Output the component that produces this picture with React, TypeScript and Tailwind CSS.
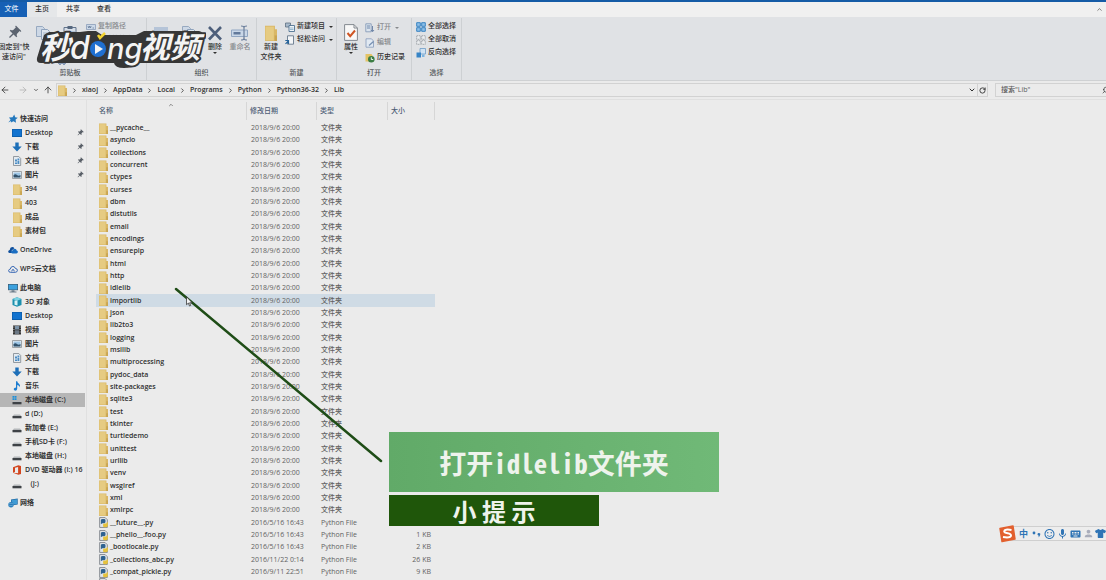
import { Fragment, type ReactNode } from "react"
import { ArrowLeft, ArrowRight, ArrowUp, ChevronDown, ChevronRight, ChevronUp, RotateCw, Search } from "lucide-react"
import { MdKeyboard, MdMic, MdOutlineSentimentSatisfied, MdPerson, MdPushPin } from "react-icons/md"
import { FaTshirt } from "react-icons/fa"

interface IconProps {
    className?: string
}

function FolderIcon({ className = "h-[11px] w-[9px]" }: IconProps) {
    return (
        <svg viewBox="0 0 8 10" preserveAspectRatio="none" className={`shrink-0 ${className}`}>
            <path d="M0 .5h6.6v2.2H8V10H0z" fill="#d9b765" />
            <path d="M.3 1h5.6v8.6H.3z" fill="#e6cb82" />
            <path d="M6.4 6.5H8V10H6.4z" fill="#c9a552" />
        </svg>
    )
}

function PythonFileIcon() {
    return (
        <svg viewBox="0 0 8 10" className="h-[11px] w-[9px] shrink-0">
            <path d="M.5.5h5L7.5 2.5v7h-7z" fill="#e3e6e9" stroke="#7d838a" strokeWidth=".8" />
            <path d="M1.600 6.400V3q0-1.200 1.600-1.200h1.400q1.200 0 1.200 1.200v1.600q0 1-1.200 1H3q-.8 0-.8.800z" fill="#2f6290" />
            <path d="M8 4.800v3q0 1.600-1.600 1.600H5q-1.400 0-1.400-1.200V7q0-1 1.200-1h1.400q.9 0 .9-1.200z" fill="#e5c23d" />
        </svg>
    )
}

function DesktopIcon() {
    return (
        <svg viewBox="0 0 10 10" className="size-[10px]">
            <path d="M0 1h10v8H0z" fill="#0c5ca8" />
            <path d="M.7 1.7h8.6v6.4H.7z" fill="#1273cf" />
        </svg>
    )
}

function DownloadIcon() {
    return (
        <svg viewBox="0 0 10 10" className="size-[10px]">
            <path d="M3.3.5h3.4v4H9.7L5 9.6.3 4.5h3z" fill="#1d6fb8" />
        </svg>
    )
}

function DocumentIcon() {
    return (
        <svg viewBox="0 0 10 10" className="size-[10px]">
            <path d="M1.5.5h5.3l1.9 2v7H1.5z" fill="#e3eaf0" stroke="#7e858d" strokeWidth=".8" />
            <path d="M3 3.500h2v2H3zM5.500 2.500h1.800v2H5.500zM5.500 5h1.800v3H5.500zM3 6.500h2v1.500H3z" fill="#4b8cc4" />
        </svg>
    )
}

function PictureIcon() {
    return (
        <svg viewBox="0 0 10 10" className="size-[10px]">
            <path d="M.5 1.500h9v7h-9z" fill="#f1f3f5" stroke="#8a9096" strokeWidth=".8" />
            <path d="M1.500 2.500h7v5h-7z" fill="#9cc4e4" />
            <path d="M1.500 5q2-1.600 3.500 0t3.500 0v2.500h-7z" fill="#31516b" />
        </svg>
    )
}

function VideoIcon() {
    return (
        <svg viewBox="0 0 10 10" className="size-[10px]">
            <path d="M1 .5h8v9H1z" fill="#333" />
            <path d="M3 1h4v3.500H3z" fill="#7c93a8" />
            <path d="M3 5.300h4V9H3z" fill="#6b7885" />
            <path d="M1.500 1.500h.8v1h-.8zM1.500 4h.8v1h-.8zM1.500 6.500h.8v1h-.8zM7.700 1.500h.8v1h-.8zM7.700 4h.8v1h-.8zM7.700 6.500h.8v1h-.8z" fill="#ddd" />
        </svg>
    )
}

function CubeIcon() {
    return (
        <svg viewBox="0 0 10 10" className="size-[10px]">
            <path d="M5 .3 9.500 2v6L5 9.800.500 8V2z" fill="#1b90ae" />
            <path d="M5 .3 9.500 2 5 3.800.500 2z" fill="#7fd3e2" />
            <path d="M2.500 3.500h3v5l-3-.8z" fill="#d7f2f6" />
        </svg>
    )
}

function MusicIcon() {
    return (
        <svg viewBox="0 0 10 10" className="size-[10px]">
            <path d="M4 .3h1.200q.3 1.700 2 2.700 1.500 1.200.4 3.200Q7.600 4.200 5.200 4v3.800q-.2 1.800-2 1.900-1.600-.2-1.500-1.600.3-1.500 2.300-1.500z" fill="#1c7cd0" />
        </svg>
    )
}

function DriveIcon({ system = false }: { system?: boolean }) {
    return (
        <svg viewBox="0 0 10 10" className="size-[10px]">
            <path d="M2 5.500h6l1.500 1.700h-9z" fill="#b4b7ba" />
            <path d="M.5 7h9v2.300h-9z" fill="#3e4246" />
            {system && <path d="M.5 1h1.800v1.800H.5zM2.700 1h1.800v1.800H2.700zM.5 3.200h1.800V5H.5zM2.700 3.200h1.800V5H2.700z" fill="#1d8fd8" />}
        </svg>
    )
}

function OfficeIcon() {
    return (
        <svg viewBox="0 0 10 10" className="size-[10px]">
            <path d="M1 2.200 6.300.3 9 1.100v7.800l-2.700.8L1 7.800l5.100.5V1.900L3 2.700v4.200l-2 .9z" fill="#d2451e" />
        </svg>
    )
}

function CloudIcon({ outline = false }: { outline?: boolean }) {
    if (outline) {
        return (
            <svg viewBox="0 0 10 10" className="size-[10px]">
                <path
                    d="M2.400 8.300Q.500 8.200.600 6.600.800 5.200 2.300 5.100 2.700 2.500 4.900 2.400q1.900.1 2.400 2 2 .1 2.100 1.900-.1 1.900-2 2zM3.500 7.300 5 5.200l1.500 2.100"
                    fill="none"
                    stroke="#3767b4"
                />
            </svg>
        )
    }
    return (
        <svg viewBox="0 0 10 10" className="size-[10px]">
            <path d="M1.500 8Q0 7.600.200 6.200.500 5 1.700 4.900 2 2.300 4.200 2q1.500 0 2.200 1.200L3.700 5.500 4 8z" fill="#0f4f9c" />
            <path d="M4.500 8.500Q2.800 8.300 3 6.900q.2-1.200 1.500-1.300.6-2 2.400-1.900 1.500.2 1.800 1.700 1.300.2 1.200 1.500-.2 1.400-1.500 1.600z" fill="#1b6ec2" />
        </svg>
    )
}

function ComputerIcon() {
    return (
        <svg viewBox="0 0 10 10" className="size-[10px]">
            <path d="M0 1h10v6.200H0z" fill="#3d5568" />
            <path d="M.6 1.600h8.800v5H.6z" fill="#3ba1de" />
            <path d="M3.500 7.200h3v1.200h-3zM1.500 8.400h7v1h-7z" fill="#6f7f8c" />
        </svg>
    )
}

function NetworkIcon() {
    return (
        <svg viewBox="0 0 10 10" className="size-[10px]">
            <path d="M3 1.500 9.700.5v6L3 7.500z" fill="#1e669f" />
            <path d="m3.600 2.100 5.500-.8v4.600l-5.500.9z" fill="#3f9bd5" />
            <circle cx="3" cy="6.700" r="2.700" fill="#2a7dba" />
            <path d="M.5 6q2.500-1.600 5 0M1 8q2-1.300 4 0" fill="none" stroke="#8cc6ea" strokeWidth=".5" />
        </svg>
    )
}

function StarIcon() {
    return (
        <svg viewBox="0 0 10 10" className="size-[10px]">
            <path d="m6.200.5 1 2.700 2.600.6-2.200 1.800.4 3.200-2.500-1.500-2.600 1.300.2-1.700L.3 8.500l2.300-2.700L1 3.600l3.600-.4z" fill="#2378bd" />
        </svg>
    )
}

// Small 2x2 boxes used by the select group
function SelectIcon({ kind }: { kind: "all" | "none" | "invert" }) {
    if (kind === "invert") {
        return (
            <svg viewBox="0 0 10 10" className="size-[10px]">
                <path d="M4 .5h5.500V6H4z" fill="#cfe2f3" stroke="#6d9cc6" strokeWidth=".8" />
                <path d="M.5 4.500H5v5H.5z" fill="#3684c6" />
                <path d="M6 6.500h2.500V9H6z" fill="#7db4e0" />
            </svg>
        )
    }
    return (
        <svg viewBox="0 0 10 10" className="size-[10px]">
            <path
                d="M.7.700h3.600v3.600H.7zM5.700.700h3.600v3.600H5.700zM.7 5.700h3.600v3.600H.7zM5.700 5.700h3.600v3.600H5.700z"
                fill={kind === "all" ? "#8fc0e8" : "#eceef0"}
                stroke={kind === "all" ? "#2a7cc0" : "#9da2a8"}
                strokeWidth=".9"
                strokeDasharray={kind === "all" ? undefined : "1.500 .6"}
            />
        </svg>
    )
}

function PagesIcon({ className = "h-4 w-[14px]" }: IconProps) {
    return (
        <svg viewBox="0 0 14 16" className={className}>
            <path d="M.5 1.500h6l2 2v8h-8z" fill="#cdd8e6" stroke="#97a9c0" />
            <path d="M5.500 4.500h6l2 2v8h-8z" fill="#dce4ee" stroke="#8ea2bc" />
            <path d="M7 8h5M7 10h5M7 12h5" stroke="#a5b5ca" />
        </svg>
    )
}

function PasteIcon() {
    return (
        <svg viewBox="0 0 14 16" className="h-4 w-[14px]">
            <path d="M1 2.500h12v12H1z" fill="#d7dfe9" stroke="#63758d" />
            <path d="M4.500 1h5v3h-5z" fill="#56677e" />
            <path d="M5 7h7v8H5z" fill="#eef1f5" stroke="#8ea2bc" />
        </svg>
    )
}

function MoveIcon() {
    return (
        <svg viewBox="0 0 14 16" className="h-4 w-[14px]">
            <path d="M0 2h14v9H0z" fill="#b5c4d8" />
            <path d="M0 11h14v4H0z" fill="#c9d3e0" />
        </svg>
    )
}

function DeleteIcon() {
    return (
        <svg viewBox="0 0 14 16" className="h-4 w-[14px]">
            <path d="M1 2 13 14.500M13 2 1 14.500" stroke="#4d5f7b" strokeWidth="2.600" />
        </svg>
    )
}

function RenameIcon() {
    return (
        <svg viewBox="0 0 18 16" className="h-4 w-[18px]">
            <path d="M.5 5h16v6.500H.5z" fill="#c9d7e8" stroke="#91a6c2" />
            <path d="M2.500 7h7v2.500h-7z" fill="#62799b" />
            <path d="M10 1q3 0 3 1.500v11q0 1.500-3 1.500M16 1q-3 0-3 1.500v11q0 1.500 3 1.500" fill="none" stroke="#6b7f9c" strokeWidth="1.200" />
        </svg>
    )
}

function PropertiesIcon() {
    return (
        <svg viewBox="0 0 14 17" className="h-[17px] w-[14px]">
            <path d="M.6.600h9.400l3.400 3.400v12.400H.6z" fill="#f8f8f8" stroke="#838990" />
            <path d="M10 .600V4h3.400" fill="none" stroke="#838990" />
            <path d="m3.500 9 2.700 3.200L11 6.500" fill="none" stroke="#cf5524" strokeWidth="2" />
        </svg>
    )
}

function SmallPageIcon({ kind }: { kind: "path" | "new" | "easy" | "open" | "edit" | "history" | "cut" }) {
    return (
        <svg viewBox="0 0 10 10" className="size-[10px] shrink-0">
            {kind === "path" && (
                <>
                    <path d="M.5 2.500h9v5h-9z" fill="#cbd8e8" stroke="#8a9db9" strokeWidth=".8" />
                    <path d="m2 4 .8 2 .8-2 .8 2 .8-2M6.500 6h1.500" fill="none" stroke="#5c7391" strokeWidth=".7" />
                </>
            )}
            {kind === "new" && (
                <>
                    <path d="M.5 1h5v4h-5z" fill="#a9bacb" stroke="#5e7082" strokeWidth=".8" />
                    <path d="M4 3.500h5.500v6H4z" fill="#eef3f7" stroke="#4e7392" strokeWidth=".9" />
                    <path d="M5 6h3.500M5 7.500h3.500" stroke="#6f9dbf" strokeWidth=".7" />
                </>
            )}
            {kind === "easy" && (
                <>
                    <path d="M2.500.800h6v8.400h-6z" fill="#f3f5f7" stroke="#66798c" strokeWidth=".9" />
                    <path d="M.3 5.500h3.200V9M.5 8.800l3-3" fill="none" stroke="#27659c" strokeWidth="1.200" />
                </>
            )}
            {kind === "open" && (
                <>
                    <path d="M.8.800h5.400v8H.8z" fill="#dbe4ee" stroke="#889cb8" strokeWidth=".9" />
                    <path d="M2 3h3M2 5h3M7.500 3v5M6 7l1.500 1.800L9 7" fill="none" stroke="#637da2" strokeWidth=".9" />
                </>
            )}
            {kind === "edit" && (
                <>
                    <path d="M1 .800h5.500L8.500 3v6.200H1z" fill="#e1e9f2" stroke="#8ea2bf" strokeWidth=".9" />
                    <path d="m4 7.500 4.500-4" stroke="#7790b2" strokeWidth="1.300" />
                </>
            )}
            {kind === "history" && (
                <>
                    <path d="M.5 1h6l1 1.500v6h-7z" fill="#e3c365" />
                    <circle cx="6.300" cy="6.300" r="3.300" fill="#3c7d43" />
                    <path d="M6.300 4.300v2.200H8.200" fill="none" stroke="#fff" strokeWidth=".9" />
                </>
            )}
            {kind === "cut" && (
                <>
                    <path d="m3 1 3 6M7 1 4 7" stroke="#687d9a" strokeWidth=".9" />
                    <circle cx="3" cy="8" r="1.300" fill="none" stroke="#4c6a96" />
                    <circle cx="7" cy="8" r="1.300" fill="none" stroke="#4c6a96" />
                </>
            )}
        </svg>
    )
}

function Caret() {
    return (
        <svg viewBox="0 0 4 2" className="h-[2px] w-1 shrink-0">
            <path d="M0 0h4L2 2z" fill="currentColor" />
        </svg>
    )
}

interface RibbonGroupProps {
    label: string
    className: string
    children: ReactNode
}

function RibbonGroup({ label, className, children }: RibbonGroupProps) {
    return (
        <section className={`flex shrink-0 flex-col border-r border-[#cdd0d3] ${className}`}>
            <div className="flex flex-1">{children}</div>
            <div className="h-[14px] text-center leading-[14px] text-[#55585c]">{label}</div>
        </section>
    )
}

interface BigButtonProps {
    icon: ReactNode
    lines?: string[]
    label?: string
    caret?: boolean
    className?: string
}

function BigButton({ icon, lines = [], label, caret = false, className = "" }: BigButtonProps) {
    return (
        <button aria-label={label} className={`flex shrink-0 flex-col items-center pt-[5px] ${className}`}>
            <span className="flex h-[19px] items-center">{icon}</span>
            {lines.map((line) => (
                <span key={line} className="leading-[10px] whitespace-nowrap">{line}</span>
            ))}
            {caret && <Caret />}
        </button>
    )
}

interface SmallButtonProps {
    icon: ReactNode
    label: string
    caret?: boolean
    muted?: boolean
}

function SmallButton({ icon, label, caret = false, muted = false }: SmallButtonProps) {
    return (
        <button className={`flex h-[13px] items-center gap-[2px] whitespace-nowrap ${muted ? "text-[#85888c]" : ""}`}>
            {icon}
            {label}
            {caret && <span className="pl-[2px]"><Caret /></span>}
        </button>
    )
}

function Ribbon() {
    return (
        <div className="flex h-16 shrink-0 border-b border-[#cfd1d3] bg-[#e0e2e5] pt-px">
            <RibbonGroup label="剪贴板" className="w-[147px] pr-[6px]">
                <BigButton
                    icon={<MdPushPin className="size-4 rotate-45 text-[#5c6470]" />}
                    lines={["固定到\"快", "速访问\""]}
                    className="w-7"
                />
                <BigButton icon={<PagesIcon />} label="复制" className="ml-[2px] w-[26px]" />
                <div className="flex w-7 flex-col items-center justify-between">
                    <BigButton icon={<PasteIcon />} label="粘贴" />
                    <SmallButton icon={<SmallPageIcon kind="cut" />} label="剪切" muted />
                </div>
                <div className="flex flex-col pt-[2px] pl-[3px]">
                    <SmallButton icon={<SmallPageIcon kind="path" />} label="复制路径" muted />
                    <SmallButton icon={<SmallPageIcon kind="easy" />} label="粘贴快捷方式" muted />
                </div>
            </RibbonGroup>
            <RibbonGroup label="组织" className="w-[110px]">
                <BigButton icon={<MoveIcon />} label="移动到" className="w-7" />
                <BigButton icon={<PagesIcon />} label="复制到" className="w-7" />
                <BigButton icon={<DeleteIcon />} lines={["删除"]} caret className="w-6" />
                <BigButton icon={<RenameIcon />} lines={["重命名"]} className="w-[26px] text-[#85888c]" />
            </RibbonGroup>
            <RibbonGroup label="新建" className="w-20">
                <BigButton icon={<FolderIcon className="h-4 w-3" />} lines={["新建", "文件夹"]} className="w-7" />
                <div className="flex flex-col pt-[2px]">
                    <SmallButton icon={<SmallPageIcon kind="new" />} label="新建项目" caret />
                    <SmallButton icon={<SmallPageIcon kind="easy" />} label="轻松访问" caret />
                </div>
            </RibbonGroup>
            <RibbonGroup label="打开" className="w-[75px]">
                <BigButton icon={<PropertiesIcon />} lines={["属性"]} caret className="w-7" />
                <div className="flex flex-col gap-[2px] pt-[3px]">
                    <SmallButton icon={<SmallPageIcon kind="open" />} label="打开" caret muted />
                    <SmallButton icon={<SmallPageIcon kind="edit" />} label="编辑" muted />
                    <SmallButton icon={<SmallPageIcon kind="history" />} label="历史记录" />
                </div>
            </RibbonGroup>
            <RibbonGroup label="选择" className="w-[50px]">
                <div className="flex flex-col pt-[2px] pl-1">
                    <SmallButton icon={<SelectIcon kind="all" />} label="全部选择" />
                    <SmallButton icon={<SelectIcon kind="none" />} label="全部取消" />
                    <SmallButton icon={<SelectIcon kind="invert" />} label="反向选择" />
                </div>
            </RibbonGroup>
        </div>
    )
}

const PATH = ["xiaoj", "AppData", "Local", "Programs", "Python", "Python36-32", "Lib"]

function AddressBar() {
    return (
        <div className="flex h-[19px] shrink-0 items-center border-b border-[#e0e0e0]">
            <div className="flex w-14 shrink-0 items-center text-[#3a3a3a]">
                <button aria-label="后退" className="flex w-[14px] justify-start"><ArrowLeft className="size-[10px]" /></button>
                <button aria-label="前进" className="flex w-[18px] justify-center text-[#b5b5b5]"><ArrowRight className="size-[10px]" /></button>
                <button aria-label="最近" className="flex w-2 justify-center"><ChevronDown className="size-[6px]" strokeWidth={3} /></button>
                <button aria-label="向上" className="flex w-4 justify-center"><ArrowUp className="size-[10px]" /></button>
            </div>
            <nav className="flex h-[14px] flex-1 items-center border border-[#d2d2d2] pl-px">
                <FolderIcon />
                {PATH.map((part) => (
                    <Fragment key={part}>
                        <ChevronRight className="w-[15px] shrink-0 text-[#444]" size={7} strokeWidth={3} />
                        <button className="font-semibold">{part}</button>
                    </Fragment>
                ))}
                <ChevronDown className="mr-px ml-auto size-2" strokeWidth={3} />
                <button aria-label="刷新" className="flex h-full w-[10px] items-center justify-center border-l border-[#d2d2d2]">
                    <RotateCw className="size-[7px]" strokeWidth={3} />
                </button>
            </nav>
            <label className="ml-[7px] flex h-[14px] w-[111px] items-center overflow-hidden border border-r-0 border-[#d2d2d2] pl-[5px]">
                <input
                    aria-label="搜索"
                    placeholder={"搜索\"Lib\""}
                    className="w-[101px] shrink-0 bg-transparent outline-none placeholder:text-[#5c5c5c]"
                />
                <Search className="size-2 shrink-0 -scale-x-100" />
            </label>
        </div>
    )
}

interface NavEntry {
    icon: ReactNode
    label: string
    pinned?: boolean
    active?: boolean
}

interface NavSection extends NavEntry {
    items?: NavEntry[]
}

const NAV: NavSection[] = [
    {
        icon: <StarIcon />,
        label: "快速访问",
        items: [
            { icon: <DesktopIcon />, label: "Desktop", pinned: true },
            { icon: <DownloadIcon />, label: "下载", pinned: true },
            { icon: <DocumentIcon />, label: "文档", pinned: true },
            { icon: <PictureIcon />, label: "图片", pinned: true },
            { icon: <FolderIcon />, label: "394" },
            { icon: <FolderIcon />, label: "403" },
            { icon: <FolderIcon />, label: "成品" },
            { icon: <FolderIcon />, label: "素材包" },
        ],
    },
    { icon: <CloudIcon />, label: "OneDrive" },
    { icon: <CloudIcon outline />, label: "WPS云文档" },
    {
        icon: <ComputerIcon />,
        label: "此电脑",
        items: [
            { icon: <CubeIcon />, label: "3D 对象" },
            { icon: <DesktopIcon />, label: "Desktop" },
            { icon: <VideoIcon />, label: "视频" },
            { icon: <PictureIcon />, label: "图片" },
            { icon: <DocumentIcon />, label: "文档" },
            { icon: <DownloadIcon />, label: "下载" },
            { icon: <MusicIcon />, label: "音乐" },
            { icon: <DriveIcon system />, label: "本地磁盘 (C:)", active: true },
            { icon: <DriveIcon />, label: "d (D:)" },
            { icon: <DriveIcon />, label: "新加卷 (E:)" },
            { icon: <DriveIcon />, label: "手机SD卡 (F:)" },
            { icon: <DriveIcon />, label: "本地磁盘 (H:)" },
            { icon: <OfficeIcon />, label: "DVD 驱动器 (I:) 16" },
            { icon: <DriveIcon />, label: "\u00a0\u00a0 (J:)" },
        ],
    },
    { icon: <NetworkIcon />, label: "网络" },
]

function NavLink({ entry, nested = false }: { entry: NavEntry; nested?: boolean }) {
    return (
        <a
            href="#"
            className={`flex h-[14px] items-center whitespace-nowrap ${nested ? "gap-[3px] pl-3" : "gap-[2px] pl-2"} ${entry.active ? "bg-[#b6b6b6]" : ""}`}
        >
            <span className="flex w-[10px] shrink-0 justify-center">{entry.icon}</span>
            <span>{entry.label}</span>
            {entry.pinned && <MdPushPin className="mr-px ml-auto size-2 rotate-45 text-[#5a6068]" />}
        </a>
    )
}

function Sidebar() {
    return (
        <aside className="flex w-[87px] shrink-0 flex-col gap-[5px] overflow-hidden border-r border-[#e0e0e0] pt-3 pr-px font-semibold">
            {NAV.map((section) => (
                <div key={section.label}>
                    <NavLink entry={section} />
                    {section.items?.map((item) => <NavLink key={item.label} entry={item} nested />)}
                </div>
            ))}
        </aside>
    )
}

const FOLDERS = [
    "__pycache__", "asyncio", "collections", "concurrent", "ctypes", "curses", "dbm", "distutils",
    "email", "encodings", "ensurepip", "html", "http", "idlelib", "importlib", "json", "lib2to3",
    "logging", "msilib", "multiprocessing", "pydoc_data", "site-packages", "sqlite3", "test",
    "tkinter", "turtledemo", "unittest", "urllib", "venv", "wsgiref", "xml", "xmlrpc",
]

const PY_FILES = [
    { name: "__future__.py", date: "2016/5/16 16:43", size: "" },
    { name: "__phello__.foo.py", date: "2016/5/16 16:43", size: "1 KB" },
    { name: "_bootlocale.py", date: "2016/5/16 16:43", size: "2 KB" },
    { name: "_collections_abc.py", date: "2016/11/22 0:14", size: "26 KB" },
    { name: "_compat_pickle.py", date: "2016/9/11 22:51", size: "9 KB" },
]

const ROWS = [
    ...FOLDERS.map((name) => ({ name, date: "2018/9/6 20:00", type: "文件夹", size: "" })),
    ...PY_FILES.map((file) => ({ ...file, type: "Python File" })),
]

function HeadCell({ label, sorted = false }: { label: string; sorted?: boolean }) {
    return (
        <th className="p-0 text-left font-medium text-[#4d5d75]">
            <div className="relative flex h-[18px] items-center border-r border-[#d6d6d6] pl-[3px]">
                {label}
                {sorted && <ChevronUp className="absolute top-0 left-1/2 size-[6px] -translate-x-1/2 text-[#666]" strokeWidth={3} />}
            </div>
        </th>
    )
}

function FileTable() {
    return (
        <table className="ml-[9px] w-[339px] table-fixed self-start whitespace-nowrap">
            <colgroup>
                <col className="w-[151px]" />
                <col className="w-[70px]" />
                <col className="w-[71px]" />
                <col className="w-[47px]" />
            </colgroup>
            <thead>
                <tr className="h-[22px]">
                    <HeadCell label="名称" sorted />
                    <HeadCell label="修改日期" />
                    <HeadCell label="类型" />
                    <HeadCell label="大小" />
                </tr>
            </thead>
            <tbody className="text-[#626262]">
                {ROWS.map((row) => (
                    <tr
                        key={row.name}
                        className={`h-3 leading-3 nth-[3n]:h-[13px] ${row.name === "importlib" ? "bg-[#cfdbe5]" : ""}`}
                    >
                        <td className="p-0 pl-[3px] font-semibold text-[#2f2f2f]">
                            <div className="flex h-3 items-center gap-[2px]">
                                {row.type === "Python File" ? <PythonFileIcon /> : <FolderIcon />}
                                {row.name}
                            </div>
                        </td>
                        <td className="p-0 pl-1">{row.date}</td>
                        <td className="p-0 pl-1">{row.type}</td>
                        <td className="p-0 pr-1 text-right">{row.size}</td>
                    </tr>
                ))}
                <tr>
                    <td className="p-0 pl-[3px]"><PythonFileIcon /></td>
                </tr>
            </tbody>
        </table>
    )
}

// Video channel logo shown over the ribbon
function Watermark() {
    return (
        <svg viewBox="0 0 172 44" className="pointer-events-none absolute top-[26px] left-[34px] h-11 w-[172px]">
            <path
                d="M10 9 15 6h31l8-1h8l6 4h34l8-4h55q5 1 4 6l-5 20q-2 6-7 6h-56q-3 5-11 5-9 0-10-5H7q-5 0-4-5z"
                fill="#363636"
            />
            <g
                fill="#f4f4f4"
                stroke="#363636"
                strokeWidth="4"
                strokeLinejoin="round"
                fontStyle="italic"
                fontWeight="700"
                className="[paint-order:stroke] font-['Inter','Noto_Sans_CJK_SC',sans-serif]"
            >
                <text x="6" y="33" fontSize="31">秒</text>
                <text x="36" y="33" fontSize="32" fontWeight="500">d</text>
                <text x="73" y="33" fontSize="29" fontWeight="500">ng</text>
                <text x="106" y="32" fontSize="30">视频</text>
            </g>
            <circle cx="64" cy="23" r="10" fill="#363636" />
            <circle cx="64" cy="23" r="8" fill="#1f6fd0" />
            <path d="m61 18 8 5-8 5z" fill="#f4f4f4" />
            <path d="m64 9 2 3 5-5" fill="none" stroke="#f3d333" strokeWidth="2.500" />
        </svg>
    )
}

function InputMethodBar() {
    return (
        <div className="absolute right-0 bottom-[39px] flex h-[15px] w-[96px] items-center border-y border-[#cfcfcf] bg-[#ededed] pl-[7px] text-[#2f74b5]">
            <svg viewBox="0 0 18 18" className="absolute -left-3 size-[18px]">
                <path d="m2 3.500 13-2.500 2 13-13 2.500z" fill="#e2602f" stroke="#e2602f" strokeWidth="1.500" strokeLinejoin="round" />
                <path d="M13.500 5q-7-1.200-7.300 1.300 0 1.600 3.500 2 3.700.5 3.300 2.600-1.200 2.500-8 1.200" fill="none" stroke="#fff" strokeWidth="2" />
            </svg>
            <span className="w-[13px] text-center text-[9px] font-bold">中</span>
            <svg viewBox="0 0 13 10" className="h-[10px] w-[13px] shrink-0">
                <circle cx="4" cy="4" r="1.400" fill="currentColor" />
                <path d="M7.500 5.500a1.400 1.400 0 1 1 2.600.6Q9.800 8 8 8.600q.8-1 .8-1.900-1-.1-1.300-1.200z" fill="currentColor" />
            </svg>
            <MdOutlineSentimentSatisfied className="w-[13px] shrink-0" size={12} />
            <MdMic className="w-[13px] shrink-0" size={12} />
            <MdKeyboard className="w-[13px] shrink-0" size={12} />
            <MdPerson className="w-[13px] shrink-0 text-[#a9adbb]" size={11} />
            <FaTshirt className="w-[11px] shrink-0" size={9} />
        </div>
    )
}

function Callout() {
    return (
        <>
            <svg viewBox="0 0 210 176" className="pointer-events-none absolute top-[287px] left-[174px] h-44 w-[210px]">
                <path d="M2 2 207 174" stroke="#1f4d17" strokeWidth="2.500" strokeLinecap="round" />
            </svg>
            <svg viewBox="0 0 7 11" className="absolute top-[296px] left-[186px] h-[11px] w-[7px]">
                <path d="M.5.700v8l1.900-1.600 1.100 2.900 1.200-.5-1.100-2.700h2.600z" fill="#f4f4f4" stroke="#222" strokeWidth=".7" />
            </svg>
            <div className="absolute top-[432px] left-[389px] flex w-[330px] flex-col items-start gap-[3px] font-['Noto_Sans_CJK_SC',sans-serif] font-bold text-[#eef3ec]">
                <div className="flex h-[60px] w-full items-center justify-center bg-linear-to-r from-[#61aa68] to-[#70b977] text-[27px] leading-none [font-feature-settings:'hwid']">
                    打开idlelib文件夹
                </div>
                <div className="flex h-[31px] w-[210px] items-center justify-center bg-[#1f560a] text-2xl leading-none">小 提 示</div>
            </div>
        </>
    )
}

export default function App() {
    return (
        <div className="relative flex h-screen flex-col overflow-hidden bg-[#ebebeb] font-['Open_Sans','Noto_Sans_CJK_SC',sans-serif] text-[7px] font-medium text-[#303030]">
            <div className="flex h-[17px] shrink-0 border-t-2 border-[#155ba6] bg-[#f0f0f0]">
                <button className="w-[27px] bg-[#1660b5] pr-1 text-[#dfe9f5]">文件</button>
                <button className="w-[30px] bg-[#e5e7e9]">主页</button>
                <button className="w-8">共享</button>
                <button className="w-[30px]">查看</button>
                <ChevronUp className="mt-1 mr-[3px] ml-auto size-[7px]" />
            </div>
            <Ribbon />
            <AddressBar />
            <main className="flex min-h-0 flex-1 overflow-hidden">
                <Sidebar />
                <FileTable />
            </main>
            <Watermark />
            <Callout />
            <InputMethodBar />
        </div>
    )
}
